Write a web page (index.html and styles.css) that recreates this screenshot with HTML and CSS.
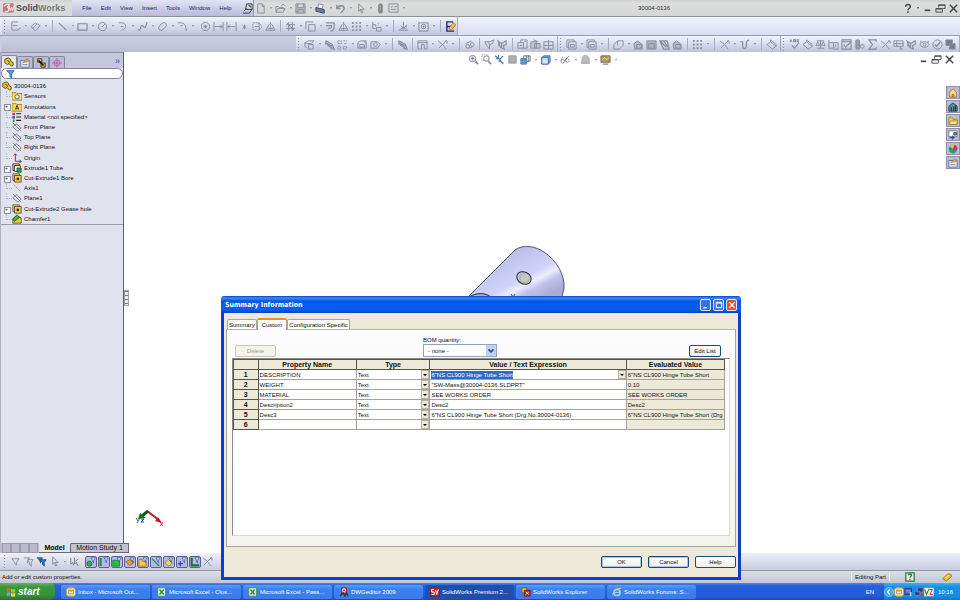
FILE: index.html
```html
<!DOCTYPE html>
<html lang="en">
<head>
  <meta charset="UTF-8" />
  <meta name="viewport" content="width=device-width, initial-scale=1.0" />
  <title>SolidWorks - 30004-0136</title>
  <link rel="stylesheet" href="styles.css">
</head>
<body>
  <header class="titlebar">
    <div class="brand">
      <svg class="logo" viewBox="0 0 14 12"><rect x="1" y="1" width="12" height="10" rx="2" fill="#c9797b"/><path d="M2 4l3-2h3l-2 3 2 2-2 3H3" fill="none" stroke="#fff" stroke-width="1.2"/><path d="M8 4l1 5 1.500-4 1 4 1.500-6" fill="none" stroke="#fbeaea"/></svg>
      <b>Solid</b><span>Works</span>
    </div>
    <nav class="menu">
      <a href="#">File</a><a href="#">Edit</a><a href="#">View</a><a href="#">Insert</a><a href="#">Tools</a><a href="#">Window</a><a href="#">Help</a>
      <div class="tools" data-tools="pin"></div>
    </nav>
    <div class="tools" data-tools="new+ open+ save+ print+ undo+ select+ traffic props+"></div>
    <h1>30004-0136</h1>
    <div class="tools dark" data-tools="help+ minimize restore close"></div>
  </header>

  <div class="toolbar">
    <div class="tools bar grip" data-tools="sketch+ dimension+ | line+ rect+ circle+ arc+ spline+ ellipse+ fillet+ _ point extendL extendR star pattern mirror | trim+ offset+ offset2 mirror grid+ move+ | ground+ display+ | rapid"></div>
  </div>

  <div class="toolbar second">
    <div class="blank"></div>
    <div class="tools bar grip" data-tools="surf+ coil rib+ loft dome+ | coil | shell+ axis+ | link | wrap flex | body combine split"></div>
    <div class="tools bar grip" data-tools="frame+ frame+ | fold+ bend flat rip bend | grid+ | axis+ curve+ | plane"></div>
    <div class="tools bar grip last" data-tools="spell plane balance measure check mass sigma axis section flex eye okay stack"></div>
  </div>

  <main>
    <aside class="panel">
      <div class="panel-tabs">
        <button class="active" data-icon="part" aria-label="FeatureManager"></button>
        <button data-icon="property" aria-label="PropertyManager"></button>
        <button data-icon="config" aria-label="ConfigurationManager"></button>
        <button data-icon="target" aria-label="DimXpert"></button>
        <span class="more">»</span>
      </div>
      <label class="filter"><span data-icon="funnel"></span><input type="text" aria-label="Filter"></label>
      <ul class="tree">
        <li class="root"><span data-icon="part"></span>30004-0136</li>
        <li><span data-icon="sensors"></span>Sensors</li>
        <li class="plus"><span data-icon="annot"></span>Annotations</li>
        <li><span data-icon="material"></span>Material &lt;not specified&gt;</li>
        <li><span data-icon="refplane"></span>Front Plane</li>
        <li><span data-icon="refplane"></span>Top Plane</li>
        <li><span data-icon="refplane"></span>Right Plane</li>
        <li><span data-icon="origin"></span>Origin</li>
        <li class="plus"><span data-icon="extrude"></span>Extrude1 Tube</li>
        <li class="plus"><span data-icon="cut"></span>Cut-Extrude1 Bore</li>
        <li><span data-icon="refaxis"></span>Axis1</li>
        <li><span data-icon="refplane"></span>Plane1</li>
        <li class="plus"><span data-icon="cut"></span>Cut-Extrude2 Gease hole</li>
        <li><span data-icon="chamfer"></span>Chamfer1</li>
      </ul>
    </aside>

    <section class="viewport">
      <div class="handle"></div>
      <div class="tools view" data-tools="zoomfit zoomarea prev sectview cube1+ cube2+ glasses+ scene+ monitor+"></div>
      <div class="tools dark win" data-tools="minimize restore close"></div>
      <div class="taskpane">
        <button data-icon="home" aria-label="Resources"></button>
        <button data-icon="library" aria-label="Design Library"></button>
        <button data-icon="folder" aria-label="File Explorer"></button>
        <button data-icon="palette" aria-label="View Palette"></button>
        <button data-icon="ball" aria-label="Appearances"></button>
        <button data-icon="property" aria-label="Custom Properties"></button>
      </div>
      <svg class="model" viewBox="0 0 100 60">
        <defs>
          <linearGradient id="steel" x1="0.200" y1="0.150" x2="0.800" y2="0.850">
            <stop offset="0" stop-color="#b3b6d9"/><stop offset=".3" stop-color="#c3c6f0"/><stop offset=".58" stop-color="#cfd2f8"/><stop offset=".7" stop-color="#eceefe"/><stop offset=".82" stop-color="#bfc2ee"/><stop offset="1" stop-color="#a9acd6"/>
          </linearGradient>
        </defs>
        <path d="M1 52L48 5C56-1 68 1 77 7C90 16 98 30 97 43L94 56L30 60Z" fill="url(#steel)" stroke="#33343f" stroke-width=".8"/>
        <path d="M2 52C8 48 18 47 24 52" fill="#a9acd8" stroke="#22232e" stroke-width=".9"/>
        <path d="M44 49l2 3 2-3" fill="none" stroke="#3a40b0"/>
        <ellipse cx="57" cy="33" rx="7.500" ry="6" transform="rotate(28 57 33)" fill="#bfc0cc" stroke="#2c2d38"/>
        <ellipse cx="58" cy="33" rx="5" ry="4.500" fill="#c9c9c6" stroke="#8f909c" stroke-width=".5"/>
      </svg>
      <svg class="triad" viewBox="0 0 30 18">
        <path d="M12 3L24 12" stroke="#c01824" stroke-width="2"/><path d="M27 15l-7-2 3-4z" fill="#c01824"/>
        <path d="M13 3L7 8" stroke="#16551f" stroke-width="3"/><path d="M3 11l2-6 6 5z" fill="#16702a"/>
        <path d="M6 11h3l-3 3h3" stroke="#2a38b0" fill="none"/><path d="M1 10l2 3M5 10l-3 5" stroke="#2a7a35" fill="none"/><path d="M25 14l3 4M28 14l-3 4" stroke="#c23a44" fill="none"/>
      </svg>
    </section>
  </main>

  <div class="sheet-tabs">
    <span class="nav"><i></i><i></i><i></i><i></i></span>
    <button class="active">Model</button><button>Motion Study 1</button>
  </div>

  <div class="toolbar filters">
    <div class="tools grip" data-tools="fil filmany filset select+ filsel"></div>
    <div class="tools toggles" data-tools="f1 f2 f3 f4 f5 f6 f7 f8 f9"></div>
    <div class="tools" data-tools="axis"></div>
  </div>

  <footer class="status">
    <p>Add or edit custom properties.</p>
    <p class="mode">Editing Part</p>
    <span data-icon="question"></span>
    <span data-icon="tag"></span>
  </footer>

  <div class="taskbar">
    <button class="start"><span data-icon="windows"></span>start</button>
    <div class="tasks">
      <button><span data-icon="outlook"></span>Inbox - Microsoft Out...</button>
      <button><span data-icon="excel"></span>Microsoft Excel - Clos...</button>
      <button><span data-icon="excel"></span>Microsoft Excel - Pass...</button>
      <button><span data-icon="dwg"></span>DWGeditor 2009</button>
      <button class="active"><span data-icon="sw"></span>SolidWorks Premium 2...</button>
      <button><span data-icon="swx"></span>SolidWorks Explorer</button>
      <button><span data-icon="ie"></span>SolidWorks Forums: S...</button>
    </div>
    <span class="lang">EN</span>
    <div class="tray">
      <span data-icon="chevron"></span><span data-icon="outlook"></span><span data-icon="shield"></span><span data-icon="network"></span><span data-icon="vnc"></span>
      <time>10:16</time>
    </div>
  </div>

  <div class="dialog" role="dialog" aria-labelledby="dialog-title">
    <div class="dialog-title">
      <h2 id="dialog-title">Summary Information</h2>
      <button data-icon="xpmin" aria-label="Minimize"></button>
      <button data-icon="xpmax" aria-label="Maximize"></button>
      <button class="red" data-icon="xpclose" aria-label="Close"></button>
    </div>
    <div class="dialog-body">
      <div class="dialog-tabs">
        <button>Summary</button><button class="active">Custom</button><button>Configuration Specific</button>
      </div>
      <div class="page">
        <div class="page-top">
          <button class="xp" disabled>Delete</button>
          <div class="bom">
            <label for="bom">BOM quantity:</label>
            <div class="combo"><select id="bom"><option>- none -</option></select><span data-icon="combo"></span></div>
          </div>
          <button class="xp edit">Edit List</button>
        </div>
        <div class="grid-box">
          <table>
            <thead>
              <tr><th class="num"></th><th class="name">Property Name</th><th class="type">Type</th><th class="value">Value / Text Expression</th><th>Evaluated Value</th></tr>
            </thead>
            <tbody>
              <tr><th>1</th><td>DESCRIPTION</td><td><div class="drop"><select aria-label="Type 1"><option>Text</option></select><i></i></div></td><td><div class="drop"><input id="value1" type="text" aria-label="Value 1" value="6&quot;NS CL900 Hinge Tube Short"><i></i></div></td><td>6"NS CL900 Hinge Tube Short</td></tr>
              <tr><th>2</th><td>WEIGHT</td><td><div class="drop"><select aria-label="Type 2"><option>Text</option></select><i></i></div></td><td>"SW-Mass@30004-0136.SLDPRT"</td><td>0.10</td></tr>
              <tr><th>3</th><td>MATERIAL</td><td><div class="drop"><select aria-label="Type 3"><option>Text</option></select><i></i></div></td><td>SEE WORKS ORDER</td><td>SEE WORKS ORDER</td></tr>
              <tr><th>4</th><td>Description2</td><td><div class="drop"><select aria-label="Type 4"><option>Text</option></select><i></i></div></td><td>Desc2</td><td>Desc2</td></tr>
              <tr><th>5</th><td>Desc3</td><td><div class="drop"><select aria-label="Type 5"><option>Text</option></select><i></i></div></td><td>6"NS CL900 Hinge Tube Short (Drg.No.30004-0136)</td><td>6"NS CL900 Hinge Tube Short (Drg</td></tr>
              <tr><th>6</th><td></td><td><div class="drop"><select aria-label="Type 6"><option></option></select><i></i></div></td><td></td><td></td></tr>
            </tbody>
          </table>
        </div>
      </div>
      <div class="buttons">
        <button class="xp default">OK</button><button class="xp default">Cancel</button><button class="xp">Help</button>
      </div>
    </div>
  </div>

  <script src="icons.js"></script>
</body>
</html>
```
FILE: styles.css
```css
* {
  box-sizing: border-box;
}
body {
  margin: 0;
  height: 100vh;
  display: flex;
  flex-direction: column;
  overflow: hidden;
  position: relative;
  font-family: "Liberation Sans", Arial, sans-serif;
  font-size: 6px;
  line-height: 8px;
  color: #111;
  background-color: #c9cbdc;
}
button, input, select {
  font: inherit;
  color: inherit;
  margin: 0;
  padding: 0;
  border: none;
  background: none;
  border-radius: 0;
}
select {
  appearance: none;
  outline: none;
}
h1, h2, p, ul {
  margin: 0;
  padding: 0;
}
svg {
  display: block;
  flex-shrink: 0;
}
[data-icon] svg {
  width: 10px;
  height: 10px;
}

/* title bar */
.titlebar {
  display: flex;
  align-items: center;
  height: 17px;
  flex-shrink: 0;
  background: linear-gradient(#cfcfcf, #dcdddd 3px, #d5d6d6);
  border-bottom: 1px solid #8e9098;
}
.brand {
  display: flex;
  align-items: center;
  width: 72px;
  padding-left: 2px;
  font-size: 9px;
  font-weight: bold;
  color: #7a7a7c;
}
.brand b {
  color: #4d4d50;
}
.logo {
  width: 13px;
  height: 12px;
  margin-right: 1px;
}
.menu {
  display: flex;
  align-items: center;
  gap: 9px;
  height: 16px;
  width: 182px;
  padding-left: 10px;
  background: linear-gradient(#e2e4f6, #b9bbd9);
  border-right: 1px solid #9a9cae;
}
.menu a {
  color: #1d1d63;
  text-decoration: none;
}
.menu .tools {
  margin-left: auto;
  margin-right: 2px;
  color: #333;
}
.titlebar h1 {
  flex: 1;
  text-align: center;
  font-size: 6px;
  font-weight: normal;
  color: #333;
}

/* toolbars */
.tools {
  display: flex;
  align-items: center;
  color: #888b98;
}
.tools.dark {
  color: #44464e;
}
.tools button {
  width: 13px;
  height: 13px;
  display: flex;
  align-items: center;
  justify-content: center;
}
.tools svg {
  width: 11px;
  height: 11px;
}
.tools .arrow {
  width: 7px;
  display: flex;
  justify-content: center;
}
.tools .arrow::before {
  content: "";
  border: 1px solid transparent;
  border-top: 2px solid currentColor;
  border-bottom: none;
}
.tools .sep {
  width: 7px;
  height: 12px;
  background: linear-gradient(#a9acc0, #a9acc0) 3px 0 / 1px 100% no-repeat;
}
.tools .gap {
  width: 3px;
}
.grip::before {
  content: "";
  width: 6px;
  margin-right: 1px;
  height: 13px;
  background: repeating-linear-gradient(#8c8fa4 0 1px, transparent 1px 3px) 2px 0 / 1px 100% no-repeat;
}
.toolbar {
  display: flex;
  flex-shrink: 0;
  height: 18px;
  padding-left: 2px;
  background: linear-gradient(#f0f1fc, #dcdff0);
}
.bar {
  height: 100%;
  background: linear-gradient(#f2f3fd, #d9dcee 50%, #bfc3d9);
  border-right: 1px solid #a7aabd;
}
.toolbar.second {
  height: 17px;
  padding-right: 4px;
  border-top: 1px solid #9c9eb0;
  background: #c9cce0;
}
.blank {
  width: 294px;
  flex-shrink: 0;
  background: linear-gradient(#cdcfe2, #bcbfd3);
}
.second .bar {
  padding-right: 2px;
}
.last {
  flex: 1;
}

/* feature tree */
main {
  flex: 1;
  display: flex;
  min-height: 0;
}
.panel {
  width: 124px;
  background: #e0e3ee;
  border-right: 1px solid #5d5e68;
  border-left: 1px solid #aeb0c2;
}
.panel-tabs {
  display: flex;
  align-items: flex-end;
  height: 16px;
  background: #c6c7de;
  border-top: 1px solid #8f91a3;
}
.panel-tabs button {
  width: 16px;
  height: 12px;
  display: flex;
  align-items: center;
  justify-content: center;
  background: #b9bbd0;
  border: 1px solid #85879b;
  border-bottom: none;
  border-radius: 2px 2px 0 0;
}
.panel-tabs .active {
  height: 13px;
  background: #e4e7f3;
}
.more {
  margin-left: auto;
  padding: 0 3px 3px;
  font-size: 9px;
  color: #44465e;
}
.filter {
  display: flex;
  align-items: center;
  height: 11px;
  padding-left: 3px;
  border: 1px solid #8385a0;
  border-radius: 6px;
  background: #fff;
}
.filter input {
  width: 100px;
  height: 8px;
  outline: none;
}
.tree {
  display: grid;
  grid-template-rows: repeat(14, 1fr);
  height: 146px;
  padding: 2px 0 0 11px;
  list-style: none;
  border-bottom: 1px solid #9a9cac;
}
.tree li {
  display: flex;
  align-items: center;
  position: relative;
  gap: 2px;
  white-space: nowrap;
}
.tree .root {
  margin-left: -10px;
}
.tree li:not(.root)::before {
  content: "";
  position: absolute;
  left: -6px;
  top: 0;
  width: 5px;
  height: 5px;
  border-left: 1px dotted #b4b6c4;
  border-bottom: 1px dotted #b4b6c4;
}
.tree li.plus::before {
  content: "+";
  left: -8px;
  top: 3px;
  border: 1px solid #8d8f9c;
  background: #fff;
  line-height: 3px;
  font-size: 5px;
}

/* graphics area */
.viewport {
  flex: 1;
  position: relative;
  background: #fff;
}
.handle {
  position: absolute;
  top: 50%;
  left: 0;
  width: 5px;
  height: 16px;
  margin-top: -8px;
  background: repeating-linear-gradient(#777 0 1px, #e8e8f0 1px 4px);
  border: 1px solid #a0a2b0;
}
.view {
  position: absolute;
  top: 1px;
  left: 343px;
}
.win {
  position: absolute;
  top: 1px;
  right: 4px;
}
.taskpane {
  position: absolute;
  top: 34px;
  right: 0;
  display: grid;
  gap: 1px;
}
.taskpane button {
  width: 14px;
  height: 13px;
  display: flex;
  align-items: center;
  justify-content: center;
  background: #b9bcd2;
  border: 1px solid #8c8fa6;
}
.model {
  position: absolute;
  top: 193px;
  left: 343px;
  width: 100px;
  height: 60px;
}
.triad {
  position: absolute;
  bottom: 17px;
  left: 11px;
  width: 30px;
  height: 18px;
}

/* bottom bars */
.sheet-tabs {
  display: flex;
  height: 10px;
  flex-shrink: 0;
  background: #fff;
}
.sheet-tabs .nav {
  display: flex;
  width: 39px;
  padding-left: 2px;
  background: #b9bbcc;
}
.sheet-tabs i {
  width: 9px;
  border: 1px solid #9c9eae;
}
.sheet-tabs button {
  width: 58px;
  font-size: 7px;
  color: #111;
  line-height: 8px;
  background: #c0c2d2;
  border: 1px solid #66687a;
  border-left: none;
}
.sheet-tabs .active {
  width: 32px;
  font-weight: bold;
  color: #000;
  background: #e0e3ee;
  border-top-color: #e0e3ee;
}
.filters {
  height: 17px;
  background: linear-gradient(#eff0fb, #c9ccdf);
}
.toggles {
  gap: 1px;
  margin-left: 4px;
}
.toggles button {
  width: 12px;
  height: 12px;
  background: #b3b9e0;
  border: 1px solid #5a6190;
  border-radius: 2px;
}
.toggles svg {
  width: 10px;
  height: 10px;
}
.status {
  display: flex;
  align-items: center;
  height: 13px;
  flex-shrink: 0;
  padding: 0 8px 0 2px;
  background: linear-gradient(#dcdee8, #c3c5d2);
  border-top: 1px solid #94969f;
}
.status .mode {
  margin-left: auto;
  margin-right: 15px;
  padding: 0 3px;
  border-left: 1px solid #f4f4fa;
  border-right: 1px solid #f4f4fa;
}
.status span:last-child {
  margin-left: 27px;
}
.taskbar {
  display: flex;
  align-items: center;
  height: 17px;
  flex-shrink: 0;
  color: #fff;
  background: linear-gradient(#3f86ee, #2560dc 3px, #245cd8 13px, #1c49b4);
}
.start {
  display: flex;
  align-items: center;
  gap: 2px;
  width: 55px;
  height: 17px;
  padding-left: 6px;
  font-size: 10px;
  font-weight: bold;
  font-style: italic;
  background: linear-gradient(#5fb45f, #3a963a 4px, #379437 12px, #2a722c);
  border-radius: 0 5px 5px 0;
}
.tasks {
  display: flex;
  gap: 2px;
  flex: 1;
  padding-left: 6px;
}
.tasks button {
  display: flex;
  align-items: center;
  gap: 2px;
  flex: 0 1 89px;
  height: 14px;
  padding-left: 5px;
  white-space: nowrap;
  background: linear-gradient(#5c9bfa, #3c81f0 4px, #3a7bea);
  border-radius: 2px;
}
.tasks .active {
  background: #1e4fae;
}
.lang {
  padding: 0 10px;
}
.tray {
  display: flex;
  align-items: center;
  width: 76px;
  height: 17px;
  background: linear-gradient(#3db3f5, #1290e8 4px, #1290e8 13px, #0f75c4);
}
.tray time {
  margin-left: 4px;
}

/* Summary Information window */
.dialog {
  position: absolute;
  top: 296px;
  left: 221px;
  width: 520px;
  background: #ece9d8;
  border: 3px solid #0f3fc8;
  border-top: none;
  border-radius: 4px 4px 0 0;
}
.dialog-title {
  display: flex;
  align-items: center;
  gap: 2px;
  height: 17px;
  margin: 0 -3px;
  padding: 1px 4px 0;
  color: #fff;
  border-radius: 4px 4px 0 0;
  background: linear-gradient(#0a3ec0, #3b8cff 2px, #0458e6 5px, #0560f4 13px, #0344c4);
}
.dialog-title h2 {
  flex: 1;
  font-family: "DejaVu Sans Condensed", "DejaVu Sans", sans-serif;
  font-size: 7px;
}
.dialog-title button {
  width: 11px;
  height: 12px;
  display: flex;
  align-items: center;
  justify-content: center;
  background: #3c70e8;
  border: 1px solid #dfe8ff;
  border-radius: 2px;
}
.dialog-title svg {
  width: 8px;
  height: 8px;
}
.dialog-title .red {
  background: #e0522c;
}
.dialog-body {
  padding: 5px 2px 9px;
}
.dialog-tabs {
  display: flex;
  align-items: flex-end;
  height: 11px;
  padding-left: 1px;
}
.dialog-tabs button {
  height: 10px;
  padding: 0 1px;
  background: #fbfaf5;
  border: 1px solid #a3a799;
  border-bottom: none;
  border-radius: 2px 2px 0 0;
}
.dialog-tabs .active {
  height: 12px;
  padding: 0 4px;
  margin-bottom: -1px;
  background: #fcfcfe;
  border-top: 2px solid #e5922d;
}
.page {
  padding: 0 5px 10px;
  background: linear-gradient(#fcfcfe, #f4f3ee);
  border: 1px solid #a3a799;
  border-top-color: #b5b8ab;
}
.page-top {
  display: flex;
  align-items: flex-end;
  height: 28px;
  padding: 0 9px 1px 3px;
}
.xp {
  width: 41px;
  height: 12px;
  line-height: 8px;
  background: linear-gradient(#fff, #efeee6);
  border: 1px solid #1c4a80;
  border-radius: 2px;
}
.xp.default {
  box-shadow: inset 0 0 0 1px #a9c4ee;
}
.xp:disabled {
  color: #a1a192;
  background: #f5f4ea;
  border-color: #c9c7ba;
}
.xp.edit {
  width: 32px;
  margin-left: auto;
}
.bom {
  margin-left: 147px;
}
.bom label {
  display: block;
}
.combo {
  display: flex;
  width: 74px;
  height: 13px;
  background: #fff;
  border: 1px solid #8fa5c0;
}
.combo select {
  flex: 1;
  padding-left: 4px;
}
.combo span {
  display: flex;
  align-items: center;
  width: 10px;
  background: #bdd0fa;
}
.grid-box {
  height: 178px;
  padding-right: 4px;
  background: #fff;
  border: 1px solid #8a8a80;
  border-bottom-color: #dcdad0;
  border-right-color: #dcdad0;
}
table {
  width: 100%;
  table-layout: fixed;
  border-collapse: collapse;
}
th, td {
  height: 10px;
  padding: 0 0 0 1px;
  line-height: 8px;
  text-align: left;
  white-space: nowrap;
  overflow: hidden;
  border: 1px solid #a5a397;
}
th {
  padding: 0;
  font-size: 7px;
  text-align: center;
  background: #ece9d8;
  border-color: #55534c;
}
.num {
  width: 5%;
}
.name {
  width: 20%;
}
.type {
  width: 15%;
}
.value {
  width: 40%;
}
td:last-child {
  background: #ece9d8;
}
.drop {
  display: flex;
  height: 9px;
}
.drop select, .drop input {
  flex: 1;
  min-width: 0;
  outline: none;
}
.drop input::selection {
  color: #fff;
  background: #316ac5;
}
.drop i {
  width: 8px;
  background: #ece9d8;
  border: 1px solid #b5b2a4;
  display: flex;
  align-items: center;
  justify-content: center;
}
.drop i::before {
  content: "";
  border: 2px solid transparent;
  border-top-color: #000;
  border-bottom: none;
}
.buttons {
  display: flex;
  justify-content: flex-end;
  gap: 6px;
  padding-top: 9px;
}
```
FILE: icons.js
```js
// 12x12 line icons, stroked with the current text colour
const icons = {
  pin: '<path d="M2 9l3-3M5 1h6v6H4z" fill="#ddd"/><path d="M7 3h2v2M1 11h7l3-4"/>',
  new: '<path d="M3 1h5l2 2v8H3zM8 1v3h2"/>',
  open: '<path d="M1 10V4h3l1 1h4v2M1 10l2-4h8l-2 4zM7 3c1-2 3-2 4 0"/>',
  save: '<path d="M1 1h10v10H1zM3 1v4h6V1M3 11V7h6v4" fill="#b9bac0"/>',
  print: '<path d="M3 5l1-4 5 1-1 4" fill="#fff"/><path d="M1 5l9 2v4L1 9z" fill="#6f7f9d" stroke="#33415f"/><circle cx="9" cy="10" r="1.5" fill="#3c68b8" stroke="none"/>',
  undo: '<path d="M2 2v4h4M2 6c2-4 8-4 8 0 0 2-2 3-4 5" stroke-width="1.500"/>',
  select: '<path d="M4 1v8l2-2 1 4 1.500-.5L7 7h3z"/>',
  traffic: '<rect x="4" y="1" width="4" height="10" rx="1.500" fill="#888"/><path d="M6 3v1M6 6v1" stroke="#ddd"/>',
  props: '<path d="M1 1h10v9H1zM3 4l1 1 1-2M7 4h3M3 7h6"/>',
  help: '<path d="M4 4c0-3 5-3 5 0 0 2-2.500 2-2.500 4M6.500 9v2" stroke-width="1.600"/>',
  minimize: '<path d="M3 8h6" stroke-width="1.800"/>',
  restore: '<path d="M4 2h7v4H9M4 2v3M4 2.500h7M1 6h7v4H1zM1 6.500h7"/>',
  close: '<path d="M2 2l8 8M10 2l-8 8" stroke-width="1.600"/>',
  sketch: '<path d="M9 1H2v9h5c3 0 4-2 4-3M3 5h5"/>',
  dimension: '<path d="M1 6l5-4 5 3-5 6zM3 8l5-5M4 9l-2-2"/>',
  line: '<path d="M2 2l8 8" stroke-width="1.400"/>',
  rect: '<path d="M1 3h10v7H1z" stroke-width="1.300"/>',
  circle: '<circle cx="6" cy="6" r="4.500"/><path d="M6 6l3-3M5 6h1"/>',
  arc: '<path d="M2 2h3c6 0 6 7 0 8M4 6h3"/>',
  spline: '<path d="M1 9c3 4 3-6 5-4s3 5 5-4" stroke-width="1.300"/>',
  ellipse: '<ellipse cx="6" cy="6" rx="5" ry="3" transform="rotate(-45 6 6)"/>',
  fillet: '<path d="M1 2h3c4 0 6 3 6 9M4 5h2"/>',
  point: '<circle cx="6" cy="6" r="4.500"/><path d="M6 4v4M4 6h4" stroke-width="1.500"/>',
  extendL: '<path d="M1 1v10M11 1v10M2 6h8M8 4l2 2-2 2"/>',
  extendR: '<path d="M1 1v10M11 1v10M2 6h8M4 4L2 6l2 2"/>',
  star: '<path d="M6 4v5M4 5l4 3M8 5L4 8"/>',
  pattern: '<path d="M1 2h7v8H1zM6 3c6 0 6 6 0 7" stroke-dasharray="2 1"/><path d="M3 6h5"/>',
  mirror: '<path d="M6 1v10" stroke-dasharray="2 1"/><path d="M5 3L1 10h10L7 3M3 8h6"/>',
  trim: '<path d="M1 4h10M1 8h10M4 1v10M8 1v10M2 2l8 8"/>',
  offset: '<path d="M1 9V1h8M4 11V4h7v7z"/>',
  offset2: '<path d="M1 2h9v5c0 2-2 4-4 4M1 5h6v2L3 9" stroke-width="1.300"/>',
  grid: '<path d="M1 2h2M5 2h2M9 2h2M1 6h2M5 6h2M9 6h2M1 10h2M5 10h2M9 10h2" stroke-width="2"/>',
  move: '<path d="M2 1v7h3M2 4h3v2M6 7h5v4H6z"/><path d="M8 2v3" stroke-dasharray="1 1"/>',
  ground: '<path d="M1 10h10M6 1v7M3 5l3 3 3-3M9 4v3M3 8h6"/>',
  display: '<path d="M1 1v10h10M1 2h10v9"/><circle cx="6" cy="6" r="2.500"/><path d="M6 5v2M5 6h2"/>',
  rapid: '<path d="M9 1H2v10h8M2 6h5" stroke="#1e2a78" stroke-width="1.500"/><path d="M4 8l5-6 3 2-5 6z" fill="#f0c040" stroke="#7a4e10" stroke-width=".6"/>',
  surf: '<path d="M1 4l4-2h6l-3 3H3zM5 6h5v5H5zM1 4v4l3 2"/>',
  coil: '<path d="M2 2l7 4M2 4l7 4M3 6l6 4M2 2v4M9 6l2 5-4-1" stroke-width="1.300"/>',
  rib: '<path d="M1 2h4v3H1zM7 2h4M8 5h3M1 8h3v3H1zM7 8h3v3H7z" stroke-dasharray="2 1"/>',
  loft: '<path d="M1 4l3-2h6v8H1zM3 6h5v3H3zM7 2l3 3"/>',
  dome: '<path d="M1 3h7l3 3-3 4H1z"/><circle cx="6" cy="6" r="2"/>',
  shell: '<path d="M1 2h10v9H8V6H5v5H1zM1 4h10"/>',
  axis: '<path d="M1 2l5 4 4-4M6 6l4 5M2 10l4-4M9 2h2v3"/>',
  link: '<circle cx="4" cy="8" r="2"/><circle cx="9" cy="6" r="2"/><path d="M2 5l6-3M5 10l5-2"/>',
  wrap: '<path d="M1 3h5l5-2-2 4-3 1v5l-3-4zM4 3l3 4"/>',
  flex: '<path d="M1 2l4 3 5-3v4L7 7l1 4-4-2zM5 5v5M2 3v5" stroke-width="1.200"/>',
  body: '<path d="M1 4h6v6H1zM4 4V1h7v9H7M7 4l3-2M3 7h3"/>',
  combine: '<path d="M1 3h6v7H1zM5 5h6v5H5zM4 1l5 2" fill="#c4c6d3"/>',
  split: '<path d="M1 3h10v8H1zM6 1v10M1 7h10"/>',
  frame: '<path d="M1 1h8v2M1 1v8h2M3 3h8v8H3zM5 6h4v3H5z"/>',
  fold: '<path d="M1 6l4-4h6v5l-4 4H1zM5 2v5"/>',
  bend: '<path d="M1 5l4-3 5 4v5H2zM4 6h5v4H4z" fill="#b7b9c6"/>',
  flat: '<path d="M1 2h10v9H1zM3 5h6v5H3z" fill="#b0b3c0"/>',
  rip: '<path d="M1 2h8l2 9H5zM2 3l6 6M5 2l5 7" stroke-width="1.300"/>',
  curve: '<path d="M1 3h3v4c0 5 4 4 4 0 0-4 0-5 3-6" stroke-width="1.300"/>',
  plane: '<path d="M1 6l4-3 6 5-4 3zM5 3V1l6 5v2"/>',
  spell: '<path d="M1 3l1-2 1 2M5 1v2h2V1zM11 1H9v2h2M3 7l3 3 5-6" stroke-width="1.200"/>',
  balance: '<path d="M2 2h8M6 1v9M1 7h4M7 7h4M3 3L1 7M3 3l2 4M9 3L7 7M9 3l2 4M2 10h8"/>',
  measure: '<path d="M1 1v9h5V4H1M6 4h5v7H6M8 6v3"/>',
  check: '<path d="M1 1h10v10H1zM1 3h10M3 6l2 3 5-5" stroke-width="1.200"/>',
  mass: '<rect x="2" y="1" width="4" height="10" rx="1" fill="#999ca8"/><circle cx="9" cy="8" r="2"/>',
  sigma: '<path d="M10 3V1H2l4 5-4 5h8V9" stroke-width="1.300"/>',
  section: '<path d="M1 2h10v6H1zM4 2v6M1 5h10M8 8v3h3"/>',
  eye: '<path d="M1 6c2-4 8-4 10 0-2 4-8 4-10 0zM2 2v2M10 2v2"/><circle cx="6" cy="6" r="1.500"/>',
  okay: '<circle cx="6" cy="6" r="5"/><path d="M3 6l2 2 4-5" stroke-width="1.400"/>',
  stack: '<path d="M1 1h7v6H1zM5 5h6v6H5z" fill="#777a88"/>',
  zoomfit: '<circle cx="5" cy="5" r="3.500" fill="#dbe7f4"/><path d="M8 8l3 3" stroke-width="2"/><path d="M5 3v4M3 5h4"/>',
  zoomarea: '<path d="M1 1h7v6H1z" stroke-dasharray="1 1"/><circle cx="6" cy="5" r="3"/><path d="M8 8l3 3" stroke-width="2"/>',
  prev: '<path d="M1 2l4 3M5 1v4H2M10 2L6 6l4 5M5 7l5 3" stroke="#4c83b0" stroke-width="1.400"/>',
  sectview: '<path d="M2 2h8v8H2z" fill="#aeb0b4" stroke="#999"/>',
  cube1: '<path d="M1 5h6v6H1z" fill="#5d9ad6" stroke="#46749f"/><path d="M4 5V2h7v6H7M7 2v3M9 2v6" stroke="#666"/>',
  cube2: '<path d="M2 4l2-2h7v7l-2 2H2z" fill="#73a7e0" stroke="#456b99"/><path d="M2 4h7v7H2z" fill="#d5e5f8" stroke="#456b99"/>',
  glasses: '<circle cx="3" cy="8" r="2"/><circle cx="8" cy="7" r="2"/><path d="M1 7l2-4M6 6l4-4M5 8h1"/>',
  scene: '<path d="M2 10V6c0-6 8-6 8 0v4zM1 10h10" fill="#babcc0" stroke="#aaa"/>',
  monitor: '<path d="M1 2h10v7H1z" fill="#b59a5c" stroke="#666"/><path d="M2 7l3-3 2 2 3-2" stroke="#ead07a"/><path d="M3 11h6" stroke="#555"/>',
  part: '<path d="M1 3l4-2 3 2v2l3 2v3l-2 1-3-3-2 1-3-2z" fill="#eac52c" stroke="#4e3f08"/><path d="M4 4l3 2-2 2" stroke="#4e3f08"/>',
  property: '<path d="M1 3h10v8H1z" fill="#e9eef8" stroke="#5d6b92"/><path d="M3 5h3M3 8h6" stroke="#5d6b92"/><path d="M5 4l3-3 3 2-3 2z" fill="#e4a35b" stroke="#94612a" stroke-width=".6"/>',
  config: '<path d="M2 1h5v4H2zM6 6h5v5H6z" fill="#e8cc3b" stroke="#222"/><path d="M3 3l6 6" stroke="#111" stroke-width="2"/>',
  target: '<circle cx="6" cy="6" r="3.500" stroke="#c04fb0"/><path d="M6 0v12M0 6h12" stroke="#c04fb0"/>',
  funnel: '<path d="M2 2h9L8 6v5L6 9V6z" fill="#4f9adf" stroke="#2b62a6"/>',
  sensors: '<path d="M0 2h5l1 1h6v8H0z" fill="#f0d968" stroke="#9a7c1a"/><circle cx="6" cy="7" r="2.500" fill="#fff" stroke="#555"/>',
  annot: '<path d="M0 2h5l1 1h6v8H0z" fill="#f4da58" stroke="#9a7c1a"/><path d="M4 9l2-5 2 5M5 8h2" stroke="#222"/>',
  material: '<path d="M5 2h6M5 6h6M5 10h6" stroke="#222" stroke-width="1.300"/><path d="M2 1v3" stroke="#d02a2a" stroke-width="3"/><path d="M2 5v3" stroke="#2c4fd0" stroke-width="3"/><path d="M2 9v3" stroke="#308a3a" stroke-width="2"/>',
  refplane: '<path d="M1 6l4-4 6 5-4 4zM1 1l10 10" stroke="#6a6d78"/>',
  origin: '<path d="M4 1v9h7M2 3l2-2 2 2" stroke="#b3242c" stroke-width="1.200"/><path d="M9 8l2 2-2 2" stroke="#333"/>',
  extrude: '<path d="M1 1h8v8H1z" fill="#f0d348" stroke="#333"/><path d="M3 3h7v7H3z" fill="#fff" stroke="#333"/><path d="M6 6h5v5H6z" fill="#35a048" stroke="#175022"/>',
  cut: '<path d="M1 1h8v8H1z" fill="#f0d348" stroke="#333" stroke-width=".8"/><path d="M3 3h8v8H3z" fill="#f3d23a" stroke="#222" stroke-width=".8"/><path d="M6 6h2v2H6z" fill="#444" stroke="#111"/>',
  refaxis: '<path d="M2 2l9 9" stroke="#999" stroke-dasharray="3 1"/>',
  chamfer: '<path d="M1 6l5-4 5 3v6H1z" fill="#f0d040" stroke="#5b4a10"/><path d="M1 6l5-5 3 3-6 5z" fill="#42b04c" stroke="#1c5a26"/>',
  home: '<path d="M1 6l5-5 5 5M2 6v5h8V6" fill="#f4dc8c" stroke="#ad6c25"/><path d="M5 11V8h2v3" stroke="#a33"/>',
  library: '<path d="M1 5l5-4 5 4v6H1z" fill="#5e8e94" stroke="#203c50"/><path d="M4 6v5M7 5v6M9 4v7" stroke="#123"/>',
  folder: '<path d="M1 2h4l1 2h5v6H1z" fill="#efd066" stroke="#a87f20"/><path d="M1 10l2-4h9l-2 4z" fill="#fbe69a" stroke="#a87f20"/>',
  palette: '<path d="M1 1h10v7H1z" fill="#fff" stroke="#6d7590"/><path d="M7 3h3v3H7z" fill="#6ba06d" stroke="#444"/><path d="M2 9h5M5 7l2 2-2 2" stroke="#2847b8" stroke-width="1.500"/>',
  ball: '<circle cx="6" cy="6" r="5" fill="#3f74c9" stroke="none"/><path d="M6 6L2 3a5 5 0 0 1 6-2z" fill="#e5c23c" stroke="none"/><path d="M6 6l2-5a5 5 0 0 1 3 6z" fill="#d33a32" stroke="none"/><path d="M6 6L1 7a5 5 0 0 0 6 4z" fill="#3ba24b" stroke="none"/>',
  fil: '<path d="M2 3h8L7 7v3L5 8V7z"/>',
  filmany: '<path d="M1 2h6L5 5v3M5 4h6L9 7v4L7 9V7z"/>',
  filset: '<path d="M1 2h6L5 5v3M4 4h7L9 7v4L7 9V7z" fill="#3878c0" stroke="#255080"/>',
  filsel: '<path d="M2 2v7l2-2 1 3M6 2v7l2-2 2 4M10 3L7 6" stroke="#777"/>',
  question: '<path d="M1 1h10v10H1z" fill="#e7f4e9" stroke="#247a3c" stroke-width="1.500"/><path d="M4 4c0-2 4-2 4 0 0 1-2 1-2 3M6 8v2" stroke="#176b30" stroke-width="1.300"/>',
  tag: '<path d="M1 8l6-6 4 1v3l-6 5z" fill="#f0bd2c" stroke="#a26b13"/><path d="M4 7l4-3" stroke="#fff3b0"/>',
  windows: '<path d="M1 2c2-1 3-1 4 0v4c-1-1-2-1-4 0z" fill="#ec5b2e" stroke="none"/><path d="M6 2c2 1 3 1 5 0v4c-2 1-3 1-5 0z" fill="#8bd044" stroke="none"/><path d="M1 7c2-1 3-1 4 0v4c-1-1-2-1-4 0z" fill="#6aa6f2" stroke="none"/><path d="M6 7c2 1 3 1 5 0v4c-2 1-3 1-5 0z" fill="#f6cf3e" stroke="none"/>',
  outlook: '<rect x="0.500" y="1" width="11" height="10" rx="3" fill="#f6dc95" stroke="#d49a37"/><path d="M3 4h6v4H3zM3 4l3 2 3-2" fill="#fff" stroke="#a86d1d" stroke-width=".7"/>',
  excel: '<path d="M1 1h9v10H1z" fill="#eef8ee" stroke="#3d8d4b"/><path d="M3 3l5 6M8 3L3 9" stroke="#2f8a40" stroke-width="1.700"/>',
  dwg: '<path d="M3 1h6v7H3z" fill="#d34f55" stroke="#7b1a22"/><circle cx="6" cy="4" r="2" stroke="#fff"/><path d="M1 11l4-4 2 4 2-4 2 4" stroke="#223a44" stroke-width="1.400"/>',
  sw: '<rect x="0.500" y="1" width="11" height="10" rx="2" fill="#c72b2f" stroke="#8a1418"/><path d="M5 3H2v3h3v3H2M7 4l1 5 2-6" stroke="#fff" stroke-width="1.200"/>',
  swx: '<path d="M1 1h6v6H1z" fill="#e8c13a" stroke="#8a4a14"/><path d="M4 4h7v7H4z" fill="#c8322f" stroke="#7a1216"/><path d="M6 6l3 3M9 6L6 9" stroke="#fff"/>',
  ie: '<circle cx="6" cy="6.500" r="3.700" stroke="#8fd1fa" stroke-width="2"/><path d="M3 6.500h6" stroke="#8fd1fa" stroke-width="1.500"/><path d="M1 10C0 7 7 0 11 2" stroke="#f1cd52" stroke-width="1.200"/>',
  chevron: '<circle cx="6" cy="6" r="5.500" fill="#4aa5f4" stroke="#bfe2ff" stroke-width=".6"/><path d="M7 3L4 6l3 3" stroke="#fff" stroke-width="1.500"/>',
  shield: '<path d="M1 2h8v7H1z" fill="#4a5ab8" stroke="#2a3580"/><path d="M2 4h6M2 6h6" stroke="#9ca9ea"/><path d="M8 6v5" stroke="#ccd" stroke-width="2"/>',
  network: '<path d="M4 1h7v5H4zM1 5h6v5H1z" fill="#29377c" stroke="#7986bd"/><path d="M8 8l3 3M11 8l-3 3" stroke="#d33" stroke-width="1.300"/>',
  vnc: '<path d="M0 1h12v10H0z" fill="#fff" stroke="#999"/><path d="M1 3l2 6 3-7" stroke="#2a9a3c" stroke-width="1.500"/><path d="M7 3h3L7 9h4" stroke="#c33" stroke-width="1.200"/>',
  xpmin: '<path d="M2 10h5" stroke="#fff" stroke-width="2"/>',
  xpmax: '<path d="M2 2h8v8H2zM2 3h8" stroke="#fff" stroke-width="1.500"/>',
  xpclose: '<path d="M2 2l8 8M10 2l-8 8" stroke="#fff" stroke-width="2"/>',
  combo: '<path d="M3 4l3 3 3-3" stroke="#35507d" stroke-width="2"/>'
};

// selection filters: a small funnel over the thing being filtered
const filter = '<path d="M6 1h5L9 4v3L8 6V4z" fill="#e4ecff" stroke="#2450a8" stroke-width=".8"/>';
icons.f1 = '<circle cx="4" cy="8" r="3" fill="#3aae4a" stroke="#176b27"/>' + filter;
icons.f2 = '<path d="M2 1v10" stroke="#258a37" stroke-width="2.500"/>' + filter;
icons.f3 = '<path d="M1 4h8v7H1z" fill="#25c63c" stroke="#168429"/>' + filter;
icons.f4 = '<path d="M1 6l5-3 5 3-5 4z" fill="#eda035" stroke="#a85c16"/>' + filter;
icons.f5 = '<path d="M1 3h4v2h5v6H1z" fill="#f0cf4f" stroke="#a6721c"/>' + filter;
icons.f6 = '<path d="M1 2l9 9" stroke="#277f70" stroke-width="1.500"/>' + filter;
icons.f7 = '<path d="M1 7l4-4 5 4-4 4z" fill="#f2df51" stroke="#8b7a1c"/>' + filter;
icons.f8 = '<path d="M4 5v6M1 8h6" stroke="#2943b8" stroke-width="1.500"/>' + filter;
icons.f9 = '<path d="M2 1v10M1 10h10" stroke="#1d7138" stroke-width="2.500"/>' + filter;

function icon(name) {
  return `<svg viewBox="0 0 12 12" fill="none" stroke="currentColor">${icons[name]}</svg>`;
}

// data-tools: icon names, "+" adds a drop-down arrow, "|" a separator, "_" a small gap
document.querySelectorAll('[data-tools]').forEach(bar => {
  bar.innerHTML = bar.dataset.tools.split(' ').map(item => {
    if (item === '|') return '<span class="sep"></span>';
    if (item === '_') return '<span class="gap"></span>';
    const name = item.replace('+', '');
    const arrow = item.endsWith('+') ? '<span class="arrow"></span>' : '';
    return `<button aria-label="${name}">${icon(name)}</button>${arrow}`;
  }).join('');
});

document.querySelectorAll('[data-icon]').forEach(el => {
  el.innerHTML = icon(el.dataset.icon);
});

const value1 = document.getElementById('value1');
value1.focus();
value1.select();
```
